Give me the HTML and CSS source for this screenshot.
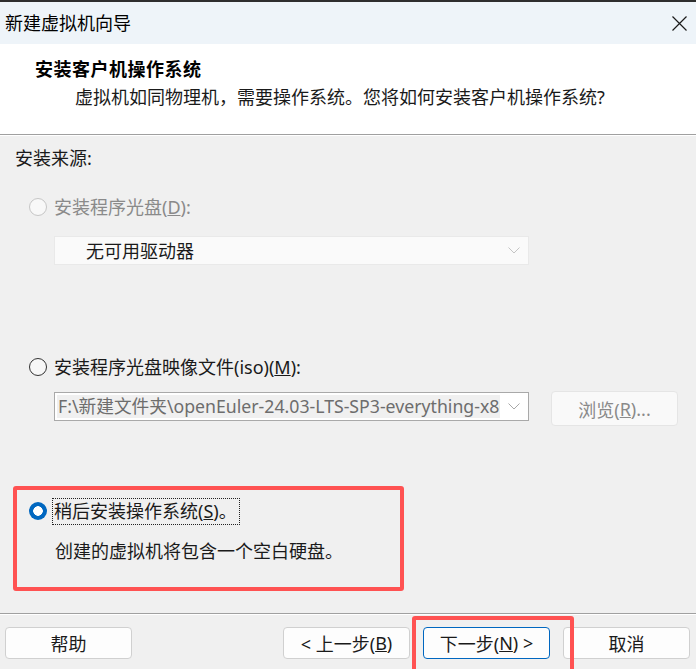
FILE: index.html
```html
<!DOCTYPE html>
<html lang="zh-CN">
<head>
<meta charset="utf-8">
<title>新建虚拟机向导</title>
<link rel="stylesheet" href="styles.css">
</head>
<body>
<div class="window">
  <div class="topline"></div>
  <div class="titlebar">
    <span class="title">新建虚拟机向导</span>
    <svg class="close" width="15" height="15" viewBox="0 0 15 15"><path d="M0.5 0.5L14.5 14.5M14.5 0.5L0.5 14.5" stroke="#1b1b1b" stroke-width="1.2" fill="none"/></svg>
  </div>
  <div class="header">
    <div class="heading">安装客户机操作系统</div>
    <div class="subtitle">虚拟机如同物理机，需要操作系统。您将如何安装客户机操作系统?</div>
  </div>
  <div class="sep"></div>
  <div class="content">
    <div class="source-label">安装来源:</div>

    <div class="radio-row disabled r1">
      <span class="radio"></span>
      <span class="label">安装程序光盘(<u>D</u>):</span>
    </div>
    <div class="combo combo-disabled c1">
      <span class="combo-text">无可用驱动器</span>
      <svg class="chev" width="12" height="7" viewBox="0 0 12 7"><path d="M0.5 0.5L6 6L11.5 0.5" stroke="#c4c4c4" stroke-width="1" fill="none"/></svg>
    </div>

    <div class="radio-row r2">
      <span class="radio"></span>
      <span class="label">安装程序光盘映像文件(iso)(<u>M</u>):</span>
    </div>
    <div class="iso-row">
      <div class="combo combo-iso">
        <span class="iso-text">F:\新建文件夹\openEuler-24.03-LTS-SP3-everything-x86</span>
        <svg class="chev" width="12" height="7" viewBox="0 0 12 7"><path d="M0.5 0.5L6 6L11.5 0.5" stroke="#a8a8a8" stroke-width="1" fill="none"/></svg>
      </div>
      <div class="browse">浏览(<u>R</u>)...</div>
    </div>

    <div class="radio-row r3">
      <span class="radio checked"></span>
      <span class="label focus">稍后安装操作系统(<u>S</u>)。</span>
    </div>
    <div class="desc">创建的虚拟机将包含一个空白硬盘。</div>
  </div>
  <div class="footer">
    <div class="btn help">帮助</div>
    <div class="nav">
      <div class="btn">&lt; 上一步(<u>B</u>)</div>
      <div class="btn default">下一步(<u>N</u>) &gt;</div>
      <div class="btn">取消</div>
    </div>
  </div>
  <div class="mark mark-later"></div>
  <div class="mark mark-next"></div>
</div>
</body>
</html>
```
FILE: styles.css
```css
* { box-sizing: border-box; }
html, body { margin: 0; padding: 0; }
body {
  width: 696px;
  height: 669px;
  overflow: hidden;
  background: #f0f0f0;
  font-family: "Noto Sans", "Noto Sans CJK SC", sans-serif;
  font-size: 17px;
  color: #1a1a1a;
}
.window {
  position: relative;
  width: 696px;
  height: 669px;
  display: flex;
  flex-direction: column;
  background: #f0f0f0;
}
.topline { height: 2px; background: #2e2e2e; }
.titlebar {
  height: 42px;
  background: #eef4f9;
  display: flex;
  align-items: center;
  justify-content: space-between;
  padding: 0 9px 0 5px;
}
.title { font-size: 18px; line-height: 22px; color: #000; }
.close { display: block; margin-top: 0; }
.header {
  height: 90px;
  background: #ffffff;
  padding-top: 13px;
}
.heading {
  font-size: 18px;
  line-height: 24px;
  font-weight: bold;
  color: #000;
  padding-left: 35px;
  letter-spacing: 0.5px;
}
.subtitle {
  font-size: 18px;
  line-height: 24px;
  padding-left: 75px;
  margin-top: 4px;
  color: #1a1a1a;
}
.sep {
  height: 2px;
  border-top: 1px solid #a0a0a0;
  border-bottom: 1px solid #ffffff;
}
.content {
  flex: 1;
  padding-top: 10px;
  padding-left: 15px;
}
.source-label { font-size: 18px; line-height: 24px; color: #1a1a1a; }
.radio-row {
  display: flex;
  align-items: center;
  height: 24px;
  padding-left: 14px;
  font-size: 18px;
}
.radio-row .label { line-height: 24px; margin-left: 7px; }
.r1 { margin-top: 25px; }
.r2 { margin-top: 90px; }
.r3 { margin-top: 73px; }
.radio {
  width: 18px;
  height: 18px;
  border-radius: 50%;
  border: 1px solid #333;
  background: #f7f7f7;
  flex: none;
}
.disabled .radio { border-color: #c6c6c6; background: #f8f8f8; }
.disabled .label { color: #8a8a8a; }
.radio.checked {
  border: none;
  background: radial-gradient(circle, #ffffff 0 4.5px, #0067c0 5px);
}
.label.focus {
  outline: 1px dotted #222;
  outline-offset: 0;
  padding: 0 2px 1px 1px;
  margin-left: 6px;
}
.combo {
  display: flex;
  align-items: center;
  justify-content: space-between;
  width: 475px;
  height: 29px;
  margin-left: 39px;
}
.c1 { margin-top: 17px; }
.combo-disabled {
  background: #fafafa;
  border: 1px solid #e9e9e9;
  padding: 0 8px 0 31px;
  font-size: 18px;
  color: #1a1a1a;
}
.combo-text { line-height: 24px; }
.iso-row {
  display: flex;
  align-items: flex-start;
  margin-top: 12px;
}
.combo-iso {
  margin-top: 1px;
  background: #ffffff;
  border: 1px solid #a9a9a9;
  padding: 2px 8px 2px 2px;
}
.iso-text {
  display: block;
  width: 443px;
  height: 23px;
  overflow: hidden;
  white-space: nowrap;
  background: #f0f0f0;
  color: #6d6d6d;
  font-size: 17.7px;
  line-height: 23px;
  padding-left: 1px;
}
.browse {
  margin-left: 22px;
  width: 127px;
  height: 35px;
  background: #f9f9f9;
  border: 1px solid #e5e5e5;
  border-radius: 4px;
  display: flex;
  align-items: center;
  justify-content: center;
  color: #8a8a8a;
  font-size: 18px;
}
.desc {
  margin-top: 16px;
  padding-left: 40px;
  font-size: 18px;
  line-height: 24px;
}
.footer {
  height: 56px;
  border-top: 1px solid #a0a0a0;
  box-shadow: inset 0 1px 0 #ffffff;
  display: flex;
  justify-content: space-between;
  padding: 13px 6px 0 5px;
}
.nav { display: flex; gap: 13px; }
.btn {
  width: 127px;
  height: 32px;
  background: #fdfdfd;
  border: 1px solid #d0d0d0;
  border-radius: 4px;
  display: flex;
  align-items: center;
  justify-content: center;
  font-size: 18px;
  color: #1a1a1a;
}
.btn.default { border-color: #0067c0; }
.mark {
  position: absolute;
  border: 4px solid #ff5252;
  border-radius: 3px;
}
.mark-later { left: 13px; top: 486px; width: 391px; height: 105px; }
.mark-next { left: 412px; top: 616px; width: 162px; height: 60px; }
```
